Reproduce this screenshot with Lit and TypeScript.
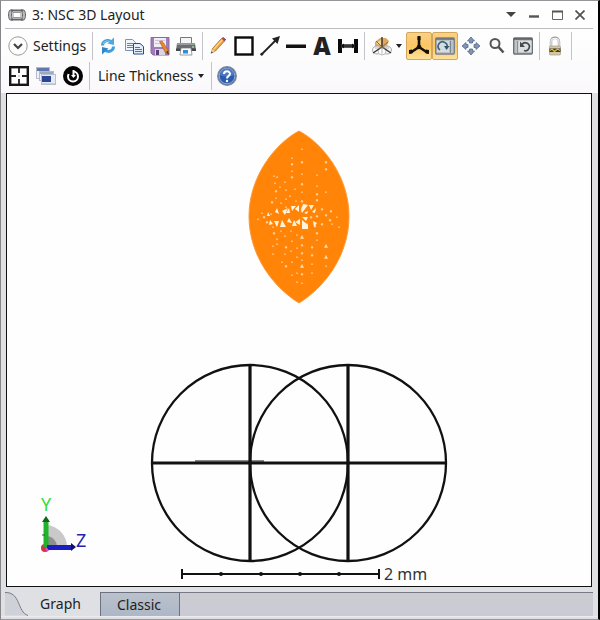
import { LitElement, html, svg, css } from "lit";
import { customElement, property, state } from "lit/decorators.js";
import { classMap } from "lit/directives/class-map.js";

const icons: Record<string, unknown> = {
  refresh: svg`
    <g fill="none" stroke="#3f9fdc" stroke-width="3">
      <path d="M4.5 9.5C4.5 5 9 3.5 13 5.5"/><path d="M15.500 10.500C15.500 15 11 16.500 7 14.500"/>
    </g>
    <path d="M16 1.500V9L9.500 7.500Z" fill="#4aa9e4"/><path d="M4 18.500V11L10.500 12.500Z" fill="#2f86c8"/>
    <path d="M5 8C6 5 9 4.500 12 5.500" stroke="#8fd0f2" fill="none"/>`,
  copy: svg`
    <path d="M1.500 3.500H8.500L11.500 6.500V14.500H1.500Z" fill="#f1f6fc" stroke="#7d93b5"/>
    <path d="M3 7.500H9M3 9.500H9M3 11.500H9" stroke="#4f88d0"/>
    <path d="M9.500 7.500H16L19.500 10.500V18H9.500Z" fill="#e3eefb" stroke="#2b4a86"/>
    <path d="M11 11.500H16M11 13.500H18M11 15.500H18" stroke="#3c76c4"/>`,
  save: svg`
    <path d="M1 1.500H19V19H3L1 17Z" fill="#a07db8" stroke="#8a6aa4"/>
    <rect x="4" y="2" width="12" height="9" fill="#f1edf6"/>
    <path d="M5 4.500H15M5 7.500H15" stroke="#cfc4dc"/>
    <rect x="5" y="13" width="10" height="6" fill="#d9d4e2"/><rect x="6" y="14" width="3" height="5" fill="#5b4277"/>
    <path d="M9.500 5.500L12 5L18 14L18.500 18L15 16Z" fill="#e88a2a" stroke="#a3541c" stroke-width=".6"/>
    <path d="M16 16L18.700 18.800L18 14.800Z" fill="#5b341a"/>`,
  print: svg`
    <path d="M4.500 1.500H15.500V8H4.500Z" fill="#f4f5f7" stroke="#777"/>
    <path d="M1 7H19L20 15H0Z" fill="#6a6d71"/><path d="M1 7H19V9H1Z" fill="#96999d"/>
    <path d="M0 12.500H20V15H0Z" fill="#45484c"/>
    <path d="M5 12H15L16 19H4Z" fill="#f8fbff" stroke="#777" stroke-width=".7"/>
    <rect x="7" y="14" width="5" height="3.500" fill="#2f8fd0"/><circle cx="17" cy="11" r="1" fill="#8fe08f"/>`,
  pencil: svg`
    <path d="M4.500 12.500L13.500 2.500L16.500 5L7.500 15L3.500 17Z" fill="#f0a13d" stroke="#a96a25" stroke-width=".8"/>
    <path d="M6 13L14.500 3.500" stroke="#ffd98c" stroke-width="1.200"/>
    <path d="M13.500 2.500L15 1L18 3.500L16.500 5.500Z" fill="#b9484f"/><path d="M15 1L18 3.500L17 4.500Z" fill="#4f5d9a"/>
    <path d="M4.500 13L7 15.200L2.800 17.300Z" fill="#e9cfa6"/><path d="M3.500 15.500L5 16.500L2.600 17.500Z" fill="#444"/>`,
  box: svg`<rect x="1.500" y="1.500" width="17" height="17" fill="#fff" stroke="#0b0b0b" stroke-width="2.400"/>`,
  arrow: svg`
    <path d="M1 19L16 4" stroke="#222" stroke-width="1.800"/><path d="M20 0L17.500 8L12 2.500Z" fill="#222"/>
    <circle cx="1.800" cy="18.200" r="1.400" fill="#222"/>`,
  line: svg`<rect y="8.500" width="20" height="3.500" fill="#111"/>`,
  span: svg`
    <path d="M0 3H4V17H0ZM16 3H20V17H16Z" fill="#0b0b0b"/><rect x="3" y="8.200" width="14" height="3.600" fill="#333"/>
    <path d="M6 7.500L3 10L6 12.500ZM14 7.500L17 10L14 12.500Z" fill="#111"/>`,
  cube: svg`
    <path d="M3 6L8 2H14L17 5L14 12L10 13L3 12Z" fill="#dda961"/><path d="M4 7L9 4L9 10Z" fill="#f4d49a"/>
    <ellipse cx="5" cy="14" rx="4.500" ry="4" fill="#fafafa" stroke="#aaa"/>
    <ellipse cx="15" cy="14" rx="4.500" ry="4" fill="#f4f4f4" stroke="#aaa"/>
    <ellipse cx="10" cy="15" rx="4" ry="4" fill="#fff" stroke="#bbb"/>
    <path d="M10 1V11M10 11L1 17M10 11L19 17" stroke="#333" stroke-width="1.400" fill="none"/>
    <path d="M10 11L4 5M10 11L16 6" stroke="#74582f" stroke-width=".8" fill="none"/>
    <path d="M10 11V18M3 12H17" stroke="#999" stroke-width=".7"/>`,
  axes: svg`
    <path d="M10 1V11M10 11L1 17M10 11L19 17" stroke="#161005" stroke-width="2.600" fill="none"/>
    <path d="M8.500 0H11.500V4H8.500ZM0 14L3 13.500L4 17L0 18ZM20 14L17 13.500L16 17L20 18Z" fill="#161005"/>
    <circle cx="10" cy="11" r="2.300" fill="#161005"/>`,
  rotateView: svg`
    <rect x=".7" y="2" width="18.600" height="16" rx="1" fill="#b9c2c9" stroke="#7d8186" stroke-width="1.400"/>
    <path d="M1 3H19" stroke="#6b7076" stroke-width="1.600"/>
    <rect x="2" y="5" width="12" height="11" fill="#d5dde2"/><path d="M15.500 5V17" stroke="#7c8790"/>
    <path d="M5 14A4.500 4.500 0 1 1 12 11.500" stroke="#406878" stroke-width="1.700" fill="none"/>
    <path d="M9 10H14.500L11.500 14Z" fill="#31566a"/>`,
  pan: svg`
    <g fill="#8096b4" stroke="#566b8a" stroke-width=".8">
      <path d="M10 1L13.500 5H11.500V7H8.500V5H6.500Z"/><path d="M10 19L13.500 15H11.500V13H8.500V15H6.500Z"/>
      <path d="M1 10L5 6.500V8.500H7V11.500H5V13.500Z"/><path d="M19 10L15 6.500V8.500H13V11.500H15V13.500Z"/>
    </g>`,
  zoom: svg`
    <circle cx="8" cy="7.500" r="4.500" fill="#fbfbfb" stroke="#565656" stroke-width="2"/>
    <path d="M11.500 11L16.500 16.500" stroke="#505050" stroke-width="2.600"/>`,
  reset: svg`
    <rect x=".7" y="2" width="18.600" height="16" rx="1" fill="#bfc3c6" stroke="#6c7073" stroke-width="1.400"/>
    <path d="M1 3H19" stroke="#5b5f62" stroke-width="1.600"/>
    <path d="M4.500 5V17" stroke="#8a8f93"/><rect x="5.500" y="5" width="13" height="11" fill="#dde0e2"/>
    <path d="M9 8.500A4 4 0 1 1 11 14.500" stroke="#454a4d" stroke-width="1.700" fill="none"/>
    <path d="M7 5.500V11H12Z" fill="#454a4d"/>`,
  lock: svg`
    <path d="M6 11V5.500C6 .5 14 .5 14 5.500V11" stroke="#9c9c9c" stroke-width="2.400" fill="none"/>
    <path d="M6 10V5.500C6 1.200 14 1.200 14 5.500V10" stroke="#efefef" stroke-width="1.200" fill="none"/>
    <rect x="4.500" y="10" width="11" height="9" rx="1" fill="#cfc8ae" stroke="#9b947a" stroke-width=".6"/>
    <rect x="4.500" y="12.500" width="11" height="3.500" fill="#3b3626"/>
    <path d="M5 14.500L7 13L9.500 15.500L12.500 13L15 14.500" stroke="#e3b53b" stroke-width="1.300" fill="none"/>`,
  fit: svg`
    <rect x="1.200" y="1.200" width="17.600" height="17.600" fill="#fff" stroke="#161616" stroke-width="2.400"/>
    <path d="M10 2V7M10 13V18M2 10H7M13 10H18" stroke="#222" stroke-width="1.800"/>
    <path d="M10 9V11M9 10H11" stroke="#ccc"/>`,
  windows: svg`
    <rect x=".5" y="1.500" width="13" height="11" fill="#eef1f6" stroke="#b6bdca"/><rect x="1" y="2" width="12" height="3" fill="#6277ac"/>
    <rect x="3.500" y="5.500" width="14" height="9" fill="#edf1f8" stroke="#b3bbca"/><rect x="4" y="6" width="13" height="2" fill="#9caac8"/>
    <rect x="5.500" y="8.500" width="14" height="10" fill="#e6eaf2" stroke="#b9c0cc"/><rect x="6" y="10" width="9" height="6" fill="#2c4696"/>
    <path d="M6 17.500H19" stroke="#c9ced7"/>`,
  target: svg`
    <circle cx="10" cy="10" r="10" fill="#050505"/><circle cx="10" cy="10.500" r="5" fill="none" stroke="#fff" stroke-width="2"/>
    <path d="M5 3L10 4V8L5 8Z" fill="#050505"/><path d="M10.500 4V10.500" stroke="#fff" stroke-width="2"/>
    <path d="M8 9L10.500 12L13 9Z" fill="#fff"/>`,
  help: svg`
    <circle cx="10" cy="10" r="9.200" fill="#2f5da8" stroke="#7886a0" stroke-width="1.500"/>
    <circle cx="10" cy="10" r="7.800" fill="#2b5bb0" stroke="#a9bbdc" stroke-width=".8"/>
    <path d="M3 9A7 7 0 0 1 17 9Q10 12 3 9Z" fill="#6f97d4" opacity=".5"/>
    <path d="M7 8C7 4.500 13 4.500 13 7.800C13 10 10 9.800 10 12.500" stroke="#fff" stroke-width="2" fill="none"/>
    <circle cx="10" cy="15" r="1.200" fill="#fff"/>`,
};

const icon = (name: string) =>
  name === "letter"
    ? html`<span class="letter">A</span>`
    : html`<svg class="icon" viewBox="0 0 20 20" width="20" height="20" aria-hidden="true">${icons[name]}</svg>`;

const caret = html`<svg width="6" height="4" viewBox="0 0 6 4" aria-hidden="true"><path d="M0 0H6L3 4Z" fill="#222"/></svg>`;

@customElement("tool-button")
class ToolButton extends LitElement {
  static styles = css`
    :host { display: block; }
    button {
      box-sizing: border-box; width: 26px; height: 28px; padding: 0;
      display: flex; align-items: center; justify-content: center; gap: 4px;
      border: 1px solid transparent; border-radius: 2px; background: none;
    }
    .on { background: linear-gradient(#fbd184, #fcc662 50%, #fde09a); border-color: #d3a85c; }
    .menu { width: 39px; padding-left: 1px; }
    .icon { display: block; flex: none; }
    .letter { font: 900 24px/26px "Noto Sans", "Open Sans", sans-serif; color: #222; }
  `;
  @property() name = "";
  @property() label = "";
  @property({ type: Boolean }) pressed = false;
  @property({ type: Boolean }) menu = false;
  render() {
    return html`<button
      class=${classMap({ on: this.pressed, menu: this.menu })}
      aria-label=${this.label}
      title=${this.label}
    >${icon(this.name)}${this.menu ? caret : ""}</button>`;
  }
}

// Gaps between rays, as [x, y, size]
const gaps: number[][] = [
  [302,149,1],[302,162,2],[292,158,1],[292,164,2],[292,171,1],[292,177,2],[302,174,1],[302,184,2],[302,192,1],[302,201,2],
  [326,162,2],[326,169,2],[317,175,1],[317,186,1],[317,194,2],[317,200,2],[326,192,1],[302,208,1],
  [274,176,1],[277,177,1],[275,183,1],[276,191,2],[280,187,1],[285,182,1],[286,190,1],[276,198,1],[286,199,1],[290,196,1],
  [272,202,2],[281,203,1],[286,207,1],[295,189,1],[296,201,1],[258,219,1],[262,213,1],[264,217,2],[267,222,2],[271,214,1],
  [331,211,2],[326,215,2],[330,220,2],[322,224,2],[315,226,2],[317,216,2],[311,217,2],[339,227,1],[307,224,1],[322,209,2],
  [273,227,1],[274,233,2],[277,239,1],[281,231,1],[285,236,1],[273,246,1],[273,254,1],[286,247,2],[277,244,1],[285,254,1],
  [291,231,1],[292,241,1],[291,251,1],[286,266,2],[292,262,1],[292,275,1],[297,235,1],[297,248,1],[297,257,1],[297,273,1],
  [302,237,3],[302,245,2],[302,253,2],[302,260,1],[302,266,3],[302,274,2],[302,283,1],[317,233,2],[317,240,1],[312,247,2],
  [312,255,2],[312,264,1],[326,246,3],[326,257,3],[326,266,1],[312,273,1],[282,262,1],[297,282,1],[332,224,1],[337,217,1],
];

@customElement("layout-view")
class LayoutView extends LitElement {
  static styles = css`
    :host { display: flex; min-height: 0; background: #fefefe; border: 1px solid #111; }
    svg { display: block; flex: 1; min-width: 0; min-height: 0; }
    .scale { font: 16px "Noto Sans", "Open Sans", sans-serif; fill: #333; }
    .axis { font: 18px "Noto Sans", "Open Sans", sans-serif; }
    .y { fill: #35dc35; }
    .z { fill: #2424b4; }
  `;
  render() {
    return html`<svg viewBox="7 94 584 492" role="img" aria-label="3D layout">
      <path d="M299 131C322 143 349 176 349 216C349 258 322 289 299 303C276 289 249 258 249 216C249 176 276 143 299 131Z"
        fill="#ff8408" stroke="#ff9a35" stroke-width="1"/>
      ${gaps.map(([x, y, s]) => svg`<path d=${`M${x - s / 2} ${y + s / 2}l${s / 2} ${-s}l${s / 2} ${s}z`}
        fill="#fff0d8" stroke="#ffc98c" stroke-width=".8"/>`)}
      <g fill="#fff3dc">
        <path d="M303 204L308 205L302 213L301 210Z"/><path d="M309 205L314 205L311 210Z"/>
        <path d="M302 220L308 225V229H302Z"/><path d="M300 219V225L295 222Z"/><path d="M302 217L308 217L306 221Z"/>
        <path d="M304 213L308 211L307 214Z"/>
        <path d="M291 206H296L292 211ZM299 205L299 212L295 209Z"/><path d="M282 211L288 208L285 215Z"/>
        <path d="M289 208L290 213L286 213ZM277 208L279 214L275 212Z"/>
        <path d="M274 221H279L277 227ZM282 220L286 227H280ZM289 218L292 223L287 222ZM294 220L297 226L292 226Z"/>
        <path d="M268 212L270 216H267ZM270 220L273 224L269 225Z"/>
        <path d="M312 212L316 208L315 213ZM313 221L317 223L314 227Z"/>
      </g>
      <g fill="none" stroke="#111" stroke-width="2.300">
        <circle cx="250" cy="463" r="98"/><circle cx="348" cy="463" r="98"/>
        <path d="M152 463H446" stroke-width="3.200"/>
        <path d="M250 365V561M348 365V561" stroke-width="3.200"/>
        <path d="M195 461H264" stroke-width="1"/>
        <path d="M182 574H379M182 569V579M379 569V579" stroke-width="2"/>
      </g>
      <g fill="#111">
        <circle cx="221" cy="574" r="2"/><circle cx="261" cy="574" r="2"/>
        <circle cx="300" cy="574" r="2"/><circle cx="339" cy="574" r="2"/>
      </g>
      <text class="scale" x="384" y="580">2 mm</text>
      <path d="M46 525A22 22 0 0 1 67 547H46Z" fill="#c9c9c9"/>
      <path d="M46 536A11 11 0 0 1 57 547H46Z" fill="#8f8f8f"/>
      <circle cx="45" cy="548" r="4" fill="#d9304c"/>
      <rect x="43.500" y="520" width="5" height="27" fill="#20b32c"/><path d="M42 522L46 516L50 522Z" fill="#15621d"/>
      <path d="M42 535H45" stroke="#176b20"/>
      <rect x="47" y="545" width="25" height="5" fill="#1d1dc6"/><path d="M71 543L76 547L71 551Z" fill="#101060"/>
      <path d="M46 548L48 551" stroke="#e050d0" stroke-width="2"/>
      <text class="axis y" x="41" y="511">Y</text>
      <text class="axis z" x="76" y="547">Z</text>
    </svg>`;
  }
}

@customElement("app-root")
class AppRoot extends LitElement {
  static styles = css`
    :host {
      box-sizing: border-box; display: flex; flex-direction: column; min-height: 100vh;
      font: 14px/20px "Noto Sans", "Open Sans", sans-serif; color: #222;
      background: #dfe0e4;
      border: 1px solid #96969a; border-right: 2px solid #000; border-left-color: #85858a;
    }
    button { font: inherit; color: inherit; background: none; border: 0; padding: 0; }
    svg { display: block; flex: none; }
    .head { background: linear-gradient(#fff, #fdfdfd 50%, #faf8fb); padding: 0 5px 2px 4px; }
    .title { display: flex; align-items: center; height: 27px; padding: 0 5px 0 3px; border-bottom: 1px solid #bcbcc0; }
    .title h1 { flex: 1; margin: 0 0 0 6px; font: inherit; }
    .controls { display: flex; gap: 7px; }
    .controls button { width: 16px; height: 16px; display: flex; align-items: center; justify-content: center; }
    .row { display: flex; align-items: center; height: 30px; }
    .row.first { padding-top: 2px; }
    .row.second { padding-left: 1px; }
    .sep { width: 1px; height: 28px; margin: 0 2px 0 3px; background: #c3c3c9; }
    .settings { display: flex; align-items: center; gap: 5px; width: 84px; padding-left: 3px; box-sizing: border-box; white-space: nowrap; }
    .thick { display: flex; align-items: center; gap: 5px; padding: 0 4px 0 6px; white-space: nowrap; }
    .trio { display: flex; gap: 1px; }
    layout-view { flex: 1; margin: 0 6px 5px 5px; }
    .tabs { display: flex; height: 24px; margin: 0 5px 0 4px; }
    .tabs button { box-sizing: border-box; height: 24px; }
    .edge { width: 24px; }
    .active { width: 71px; padding-right: 8px; text-align: center; }
    .other { width: 80px; padding-right: 2px; border: 1px solid #6d7180; border-bottom: 0; background: linear-gradient(#b9c1cb, #aeb7c6); }
    .rest { flex: 1; border-top: 1px solid #777a84; background: linear-gradient(#cacdd1, #cacad6); }
    .foot { height: 2px; border-top: 1px solid #ececf0; }
  `;
  @state() tab = "Graph";

  tool(name: string, label: string, pressed = false, menu = false) {
    return html`<tool-button name=${name} label=${label} ?pressed=${pressed} ?menu=${menu}></tool-button>`;
  }

  render() {
    const sep = html`<span class="sep"></span>`;
    return html`
      <header class="head">
        <div class="title">
          <svg width="18" height="14" viewBox="0 0 18 14" aria-hidden="true">
            <path d="M2 2C0 4 0 10 2 12H5C3 10 3 4 5 2ZM16 2C18 4 18 10 16 12H13C15 10 15 4 13 2Z" fill="#bbb" stroke="#666"/>
            <path d="M3 2.500H15M3 11.500H15" stroke="#666" stroke-width="1.800"/><path d="M5 4.500H13M5 9.500H13M5 4V10M13 4V10" stroke="#999"/>
          </svg>
          <h1>3: NSC 3D Layout</h1>
          <div class="controls">
            <button aria-label="Window menu"><svg width="10" height="5" viewBox="0 0 10 5"><path d="M0 0H10L5 5Z" fill="#444"/></svg></button>
            <button aria-label="Minimize"><svg width="10" height="10" viewBox="0 0 10 10"><path d="M0 6.500H10" stroke="#555" stroke-width="2.400"/></svg></button>
            <button aria-label="Maximize"><svg width="11" height="10" viewBox="0 0 11 10"><path d="M.5 1V9.500H10.500V1" fill="none" stroke="#666"/><path d="M0 1.500H11" stroke="#555" stroke-width="2"/></svg></button>
            <button aria-label="Close"><svg width="10" height="10" viewBox="0 0 10 10"><path d="M.5 .5L9.500 9.500M9.500 .5L.5 9.500" stroke="#505050" stroke-width="1.700"/></svg></button>
          </div>
        </div>
        <div class="row first">
          <button class="settings">
            <svg width="20" height="20" viewBox="0 0 20 20" aria-hidden="true">
              <circle cx="10" cy="10" r="9.200" fill="#fdfdfd" stroke="#999"/>
              <path d="M6 8L10 12L14 8" fill="none" stroke="#444" stroke-width="2.200"/>
            </svg>
            <span>Settings</span>
          </button>
          ${sep}
          ${this.tool("refresh", "Update")}${this.tool("copy", "Copy")}${this.tool("save", "Save")}${this.tool("print", "Print")}
          ${sep}
          ${this.tool("pencil", "Draw")}${this.tool("box", "Rectangle")}${this.tool("arrow", "Arrow")}
          ${this.tool("line", "Line")}${this.tool("letter", "Text")}${this.tool("span", "Measure")}
          ${sep}
          ${this.tool("cube", "View orientation", false, true)}
          ${this.tool("axes", "Show axes", true)}${this.tool("rotateView", "Rotate", true)}
          ${this.tool("pan", "Pan")}${this.tool("zoom", "Zoom")}${this.tool("reset", "Reset view")}
          ${sep}
          ${this.tool("lock", "Lock window")}
          ${sep}
        </div>
        <div class="row second">
          <div class="trio">${this.tool("fit", "Fit")}${this.tool("windows", "Windows")}${this.tool("target", "Active")}</div>
          ${sep}
          <button class="thick"><span>Line Thickness</span>${caret}</button>
          ${sep}
          ${this.tool("help", "Help")}
        </div>
      </header>
      <layout-view></layout-view>
      <nav class="tabs">
        <svg class="edge" height="24" viewBox="0 0 24 24" aria-hidden="true">
          <path d="M0 0.500C16 0 12 20 23 23.500H0Z" fill="#cfd1d8"/>
          <path d="M0 0.500C16 0 12 20 23 23.500" fill="none" stroke="#777a84"/>
        </svg>
        <button class="active" @click=${() => (this.tab = "Graph")}>Graph</button>
        <button class="other" @click=${() => (this.tab = "Classic")}>Classic</button>
        <span class="rest"></span>
      </nav>
      <div class="foot"></div>
    `;
  }
}
